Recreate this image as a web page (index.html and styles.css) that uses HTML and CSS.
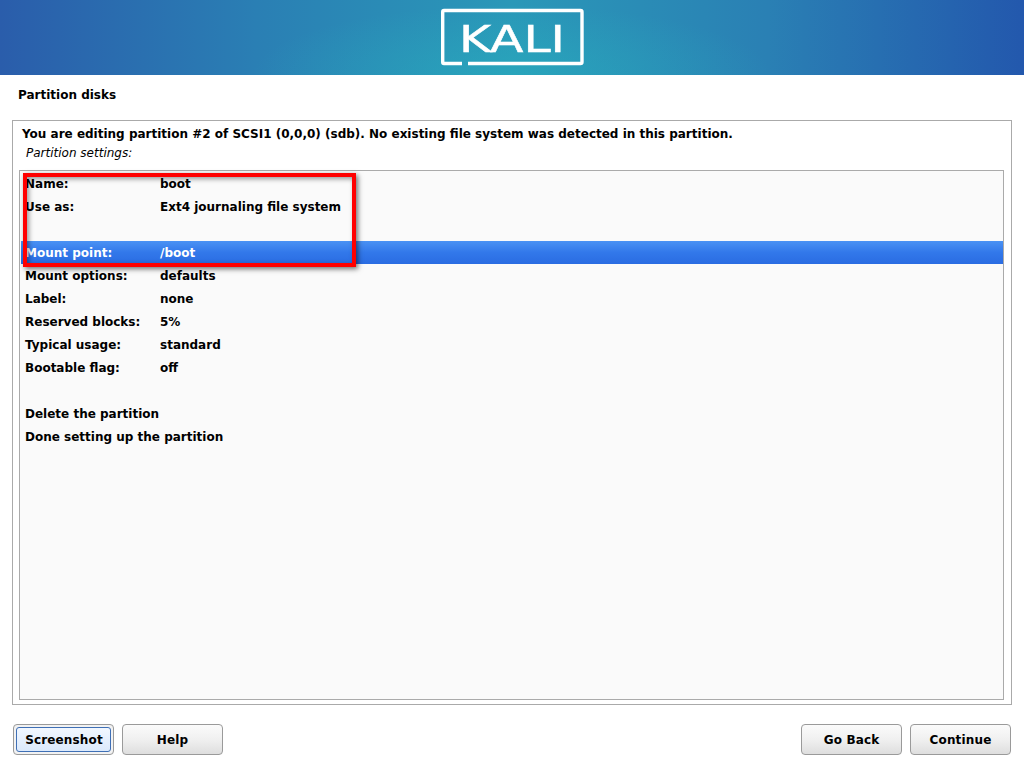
FILE: index.html

```html
<!DOCTYPE html>
<html lang="en">
<head>
  <meta charset="UTF-8" />
  <title>Partition disks</title>
  <link rel="stylesheet" href="styles.css">
</head>
<body>
  <header class="banner">
    <svg class="logo" width="147" height="60" viewBox="0 0 147 60">
      <path d="M24 55.5 H6 Q4.7 55.5 4.7 54 V4 Q4.7 2.5 6 2.5 H142.5 Q144 2.5 144 4 V54 Q144 55.5 142.5 55.5 H30" fill="none" stroke="#fff" stroke-width="3.4" />
      <text class="logo-text" x="21" y="44" textLength="106" lengthAdjust="spacingAndGlyphs">KALI</text>
    </svg>
  </header>

  <h1 class="title">Partition disks</h1>

  <main class="panel">
    <p class="intro">You are editing partition #2 of SCSI1 (0,0,0) (sdb). No existing file system was detected in this partition.</p>
    <p class="caption">Partition settings:</p>
    <div class="list">
      <div class="row"><span class="key">Name:</span><span>boot</span></div>
      <div class="row"><span class="key">Use as:</span><span>Ext4 journaling file system</span></div>
      <div class="row"></div>
      <div class="row selected"><span class="key">Mount point:</span><span>/boot</span></div>
      <div class="row"><span class="key">Mount options:</span><span>defaults</span></div>
      <div class="row"><span class="key">Label:</span><span>none</span></div>
      <div class="row"><span class="key">Reserved blocks:</span><span>5%</span></div>
      <div class="row"><span class="key">Typical usage:</span><span>standard</span></div>
      <div class="row"><span class="key">Bootable flag:</span><span>off</span></div>
      <div class="row"></div>
      <div class="row">Delete the partition</div>
      <div class="row">Done setting up the partition</div>
    </div>
  </main>

  <footer class="actions">
    <div class="group">
      <button class="btn focused" type="button"><span>Screenshot</span></button>
      <button class="btn" type="button"><span>Help</span></button>
    </div>
    <div class="group">
      <button class="btn" type="button"><span>Go Back</span></button>
      <button class="btn" type="button"><span>Continue</span></button>
    </div>
  </footer>

  <div class="highlight"></div>
</body>
</html>
```

FILE: styles.css

```css
* { box-sizing: border-box; }
html, body { height: 100%; }
body {
  margin: 0;
  height: 768px;
  overflow: hidden;
  position: relative;
  background: #fff;
  color: #000;
  font-family: "DejaVu Sans", sans-serif;
  font-size: 12px;
  font-weight: bold;
}

.banner {
  height: 75px;
  display: flex;
  justify-content: center;
  padding: 8px 1px 0 0;
  background:
    radial-gradient(ellipse 260px 70px at 50% 100%, rgba(40, 175, 190, 0.55), rgba(40, 175, 190, 0)),
    linear-gradient(90deg, #2a5dab 0%, #2a7fb4 25%, #2a98b8 50%, #2a80b4 75%, #2358ad 100%);
}
.logo { display: block; filter: blur(0.4px); }
.logo-text { font-family: "DejaVu Sans", sans-serif; font-size: 38px; font-weight: normal; fill: #fff; stroke: #fff; stroke-width: 0.5px; }

.title { margin: 0; padding: 12px 0 0 18px; height: 45px; font-size: 12px; line-height: 17px; font-weight: bold; }

.panel {
  margin: 0 12px;
  height: 585px;
  border: 1px solid #aaa;
  padding: 5px 7px 4px 6px;
  display: flex;
  flex-direction: column;
}
.intro { margin: 0 0 0 3px; line-height: 17px; }
.caption { margin: 2px 0 0 7px; height: 25px; line-height: 17px; font-weight: normal; font-style: italic; font-size: 12px; }
.list { flex: 1; border: 1px solid #aaa; background: #fafafa; padding: 1px 0 1px 1px; }

.row { height: 23px; line-height: 25px; padding-left: 4px; display: flex; }
.key { width: 135px; }
.selected { color: #fff; background: linear-gradient(180deg, #4a92f4 0%, #3278ea 50%, #2a6ce2 100%); }

.actions { display: flex; justify-content: space-between; padding: 19px 13px 0; }
.group { display: flex; gap: 8px; }
.btn {
  width: 101px;
  height: 31px;
  padding: 0;
  border: 1px solid #9a9a9a;
  border-radius: 4px;
  background: linear-gradient(180deg, #fbfbfb 0%, #f0f0f0 50%, #dedede 100%);
  color: #000;
  font: inherit;
  letter-spacing: 0.15px;
}
.focused { padding: 2px; background: #f2f2f2; }
.focused span {
  display: block;
  height: 100%;
  line-height: 25px;
  padding-left: 1px;
  border: 1px solid #3f6fb5;
  border-radius: 3px;
  background: linear-gradient(180deg, #f1f7ff 0%, #dbe9fb 100%);
}

.highlight {
  position: absolute;
  left: 23px;
  top: 173px;
  width: 333px;
  height: 94px;
  border: 4px solid #ff0000;
  box-shadow: 2px 2px 5px rgba(0, 0, 0, 0.55), inset 2px 2px 5px rgba(0, 0, 0, 0.4);
}
```
